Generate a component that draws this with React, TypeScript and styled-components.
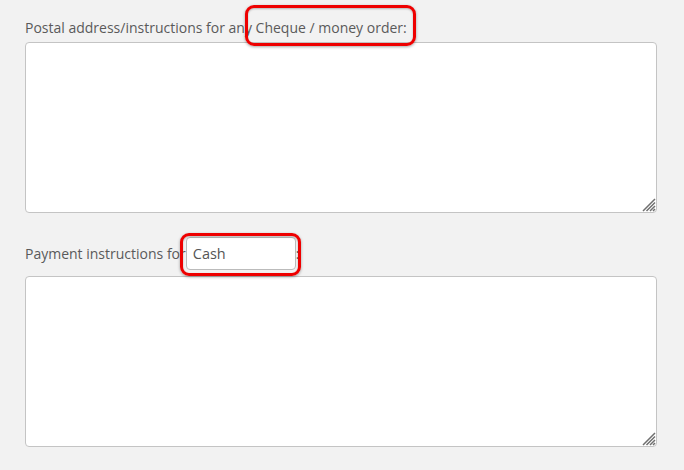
import React from "react";
import styled, { createGlobalStyle } from "styled-components";

const GlobalStyle = createGlobalStyle`
  html, body {
    margin: 0;
    padding: 0;
    background: #f2f2f2;
  }
  body {
    font-family: "Open Sans", "Liberation Sans", sans-serif;
    color: #555;
  }
`;

function Grip() {
  return (
    <GripMark width="15" height="15" viewBox="0 0 15 15">
      <path
        d="M14 2 L2 14 M14 5.5 L5.5 14 M14 9 L9 14 M14 12 L12 14"
        stroke="#707070"
        strokeWidth="1.5"
        fill="none"
      />
    </GripMark>
  );
}

export default function App() {
  return (
    <>
      <GlobalStyle />
      <Page>
        <Field>
          <Label>
            Postal address/instructions for any{" "}
            <Marked inset="-15px -9px -10px -11px">Cheque / money order:</Marked>
          </Label>
          <AreaWrap>
            <Area />
            <Grip />
          </AreaWrap>
        </Field>

        <Field>
          <Label>
            Payment instructions for
            <Marked inset="-4px -5px -6px -6px">
              <NameInput defaultValue="Cash" />
            </Marked>
            :
          </Label>
          <AreaWrap>
            <Area />
            <Grip />
          </AreaWrap>
        </Field>
      </Page>
    </>
  );
}

const Page = styled.div`
  padding: 19px 27px 0 25px;
  display: flex;
  flex-direction: column;
  gap: 24px;
`;

const Field = styled.div`
  display: flex;
  flex-direction: column;
  gap: 6px;
`;

const Label = styled.label`
  font-size: 14px;
  line-height: 16px;
  color: #5a5a5a;
  display: flex;
  align-items: center;
  white-space: pre;
  min-height: 17px;
`;

const Marked = styled.span<{ inset: string }>`
  position: relative;
  display: inline-flex;
  align-items: center;

  &::after {
    content: "";
    position: absolute;
    z-index: 2;
    inset: ${(p) => p.inset};
    border: 3px solid #ee0000;
    border-radius: 9px;
    box-shadow: 0 1px 3px rgba(0, 0, 0, 0.35), inset 0 1px 2px rgba(0, 0, 0, 0.25);
    pointer-events: none;
  }
`;

const NameInput = styled.input`
  box-sizing: border-box;
  width: 110px;
  height: 33px;
  margin-left: 0;
  padding: 0 6px;
  border: 1px solid #bbb;
  border-radius: 4px;
  background: #fff;
  font-family: "Open Sans", "Liberation Sans", sans-serif;
  font-size: 14.5px;
  color: #555;
  outline: none;
`;

const AreaWrap = styled.div`
  position: relative;
  width: 632px;
  height: 171px;
`;

const Area = styled.textarea`
  display: block;
  box-sizing: border-box;
  width: 100%;
  height: 100%;
  margin: 0;
  border: 1px solid #c4c4c4;
  border-radius: 4px;
  background: #fff;
  font-family: "Open Sans", "Liberation Sans", sans-serif;
  font-size: 14px;
  outline: none;
  resize: none;
`;

const GripMark = styled.svg`
  position: absolute;
  right: 1px;
  bottom: 1px;
  pointer-events: none;
`;
